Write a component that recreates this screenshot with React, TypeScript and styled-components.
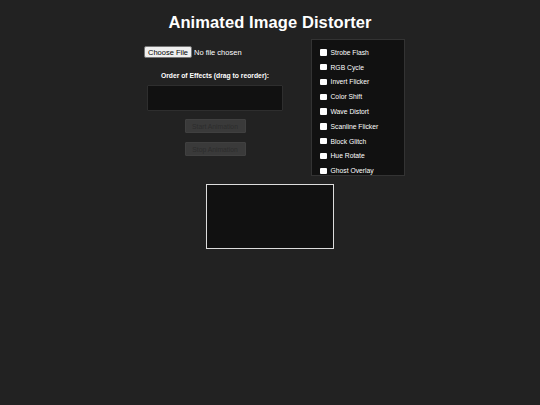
import styled, { createGlobalStyle } from 'styled-components'

const GlobalStyle = createGlobalStyle`
  html, body {
    margin: 0;
    padding: 0;
    background: #222222;
    color: #ffffff;
    font-family: "Liberation Sans", Arial, sans-serif;
  }
`

const effects = [
  'Strobe Flash',
  'RGB Cycle',
  'Invert Flicker',
  'Color Shift',
  'Wave Distort',
  'Scanline Flicker',
  'Block Glitch',
  'Hue Rotate',
  'Ghost Overlay',
]

const Page = styled.div`
  width: 540px;
  min-height: 405px;
  padding-top: 12px;
  display: flex;
  flex-direction: column;
  align-items: center;
`

const Title = styled.h1`
  margin: 0;
  font-size: 16.5px;
  line-height: 20px;
  font-weight: bold;
  letter-spacing: 0.1px;
`

const ControlsRow = styled.div`
  margin-top: 7px;
  display: flex;
  justify-content: center;
  align-items: flex-start;
  gap: 25px;
  padding-left: 9px;
`

const LeftColumn = styled.div`
  width: 142px;
  padding-top: 7px;
  display: flex;
  flex-direction: column;
  align-items: center;
`

const FileInput = styled.input`
  align-self: flex-start;
  font-family: "Liberation Sans", Arial, sans-serif;
  font-size: 7.5px;
  color: #ffffff;
  height: 12px;
  width: 110px;

  &::file-selector-button {
    font-family: "Liberation Sans", Arial, sans-serif;
    font-size: 7.5px;
    height: 12px;
    padding: 0 3px;
    margin-right: 2px;
    border: 1px solid #767676;
    border-radius: 2px;
    background: #efefef;
    color: #000000;
  }
`

const OrderLabel = styled.div`
  margin-top: 13px;
  font-size: 6.75px;
  line-height: 9px;
  font-weight: bold;
`

const DropZone = styled.div`
  margin-top: 5px;
  width: 136px;
  height: 26px;
  box-sizing: border-box;
  background: #111111;
  border: 1px solid #2e2e2e;
  border-radius: 1px;
`

const ActionButton = styled.button<{ $gap: number }>`
  margin-top: ${p => p.$gap}px;
  width: 61px;
  height: 14px;
  padding: 0;
  font-family: "Liberation Sans", Arial, sans-serif;
  font-size: 6.75px;
  background: #3a3a3a;
  color: #2c2c2c;
  border: 1px solid #404040;
  border-radius: 1px;
`

const EffectsPanel = styled.div`
  width: 94px;
  height: 137px;
  box-sizing: border-box;
  background: #111111;
  border: 1px solid #333333;
  padding: 5px 0 0 8px;
  overflow: hidden;
`

const EffectRow = styled.label`
  display: flex;
  align-items: center;
  height: 14.8px;
  font-size: 6.75px;
  color: #ffffff;
`

const Check = styled.input`
  appearance: none;
  margin: 0 4px 0 0;
  width: 6.5px;
  height: 6.5px;
  background: #ffffff;
  border: none;
  border-radius: 1px;
`

const Canvas = styled.canvas`
  margin-top: 8px;
  display: block;
  width: 128px;
  height: 65px;
  box-sizing: border-box;
  background: #111111;
  border: 1px solid #dddddd;
`

export default function App() {
  return (
    <>
      <GlobalStyle />
      <Page>
        <Title>Animated Image Distorter</Title>
        <ControlsRow>
          <LeftColumn>
            <FileInput type="file" accept="image/*" />
            <OrderLabel>Order of Effects (drag to reorder):</OrderLabel>
            <DropZone />
            <ActionButton $gap={8} disabled>Start Animation</ActionButton>
            <ActionButton $gap={9} disabled>Stop Animation</ActionButton>
          </LeftColumn>
          <EffectsPanel>
            {effects.map(name => (
              <EffectRow key={name}>
                <Check type="checkbox" />
                {name}
              </EffectRow>
            ))}
          </EffectsPanel>
        </ControlsRow>
        <Canvas />
      </Page>
    </>
  )
}
